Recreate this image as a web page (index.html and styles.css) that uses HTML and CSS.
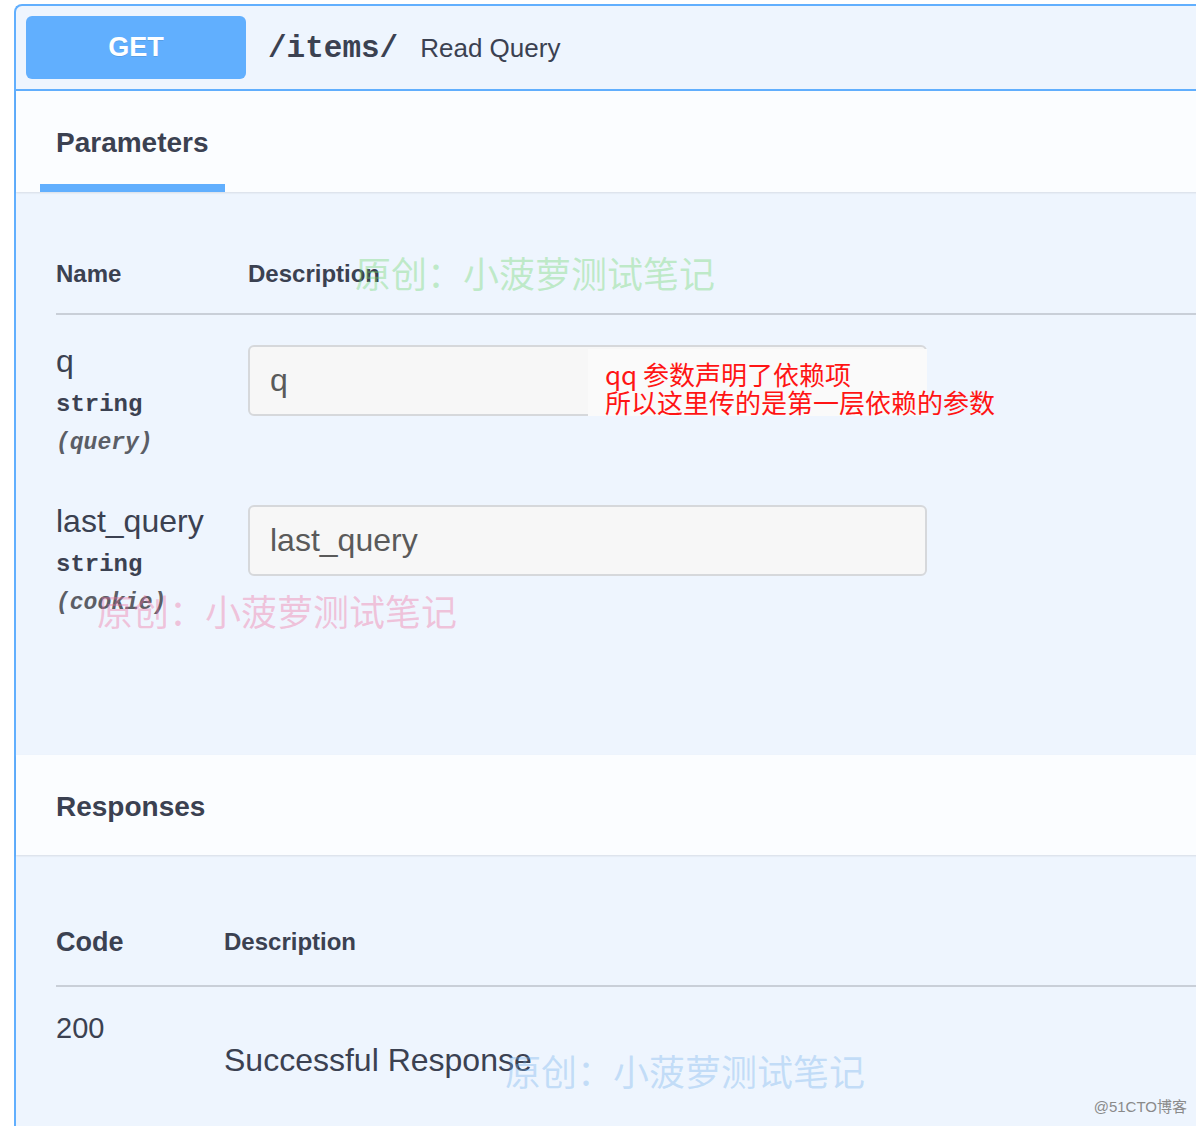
FILE: index.html
```html
<!DOCTYPE html>
<html lang="zh-CN">
<head>
<meta charset="utf-8">
<title>Read Query</title>
<link rel="stylesheet" href="styles.css">
</head>
<body>
<div class="page">
  <div class="opblock">
    <div class="summary">
      <span class="method">GET</span>
      <span class="path">/items/</span>
      <span class="summary-desc">Read Query</span>
    </div>
    <div class="tab-header">
      <div class="tab">Parameters</div>
    </div>
    <div class="params">
      <table class="ptable">
        <thead>
          <tr><th class="col-name">Name</th><th>Description</th></tr>
        </thead>
        <tbody>
          <tr>
            <td class="col-name">
              <div class="pname">q</div>
              <div class="ptype">string</div>
              <div class="pin">(query)</div>
            </td>
            <td><input class="pinput" type="text" placeholder="q"></td>
          </tr>
          <tr>
            <td class="col-name">
              <div class="pname">last_query</div>
              <div class="ptype">string</div>
              <div class="pin">(cookie)</div>
            </td>
            <td><input class="pinput" type="text" placeholder="last_query"></td>
          </tr>
        </tbody>
      </table>
    </div>
    <div class="resp-header">Responses</div>
    <div class="responses">
      <table class="rtable">
        <thead>
          <tr><th class="col-code">Code</th><th class="col-desc">Description</th></tr>
        </thead>
        <tbody>
          <tr>
            <td class="col-code code-val">200</td>
            <td><p class="resp-desc">Successful Response</p></td>
          </tr>
        </tbody>
      </table>
    </div>
  </div>

  <div class="note">qq 参数声明了依赖项<br>所以这里传的是第一层依赖的参数</div>
  <div class="wm wm-green">原创：小菠萝测试笔记</div>
  <div class="wm wm-pink">原创：小菠萝测试笔记</div>
  <div class="wm wm-blue">原创：小菠萝测试笔记</div>
  <div class="credit">@51CTO博客</div>
</div>
</body>
</html>
```

FILE: styles.css
```css
html, body {
  margin: 0;
  padding: 0;
  background: #ffffff;
  overflow: hidden;
}

body {
  font-family: "Liberation Sans", Arial, "Noto Sans CJK SC", sans-serif;
  color: #3b4151;
}

.page {
  position: relative;
  width: 1196px;
  height: 1126px;
  box-sizing: border-box;
  padding: 4px 0 0 14px;
  overflow: hidden;
}

.opblock {
  width: 1200px;
  border: 2px solid #61affe;
  border-right: 0;
  border-bottom: 0;
  border-radius: 8px 0 0 0;
  background: #eef5fe;
  height: 1200px;
}

/* summary bar */
.summary {
  display: flex;
  align-items: center;
  padding: 10px;
  border-bottom: 2px solid #61affe;
}

.method {
  width: 220px;
  height: 63px;
  display: flex;
  align-items: center;
  justify-content: center;
  background: #61affe;
  color: #ffffff;
  font-weight: bold;
  font-size: 27px;
  border-radius: 6px;
  text-shadow: 0 1px 0 rgba(0, 0, 0, 0.1);
}

.path {
  margin-left: 22px;
  font-family: "Liberation Mono", "Courier New", monospace;
  font-weight: bold;
  font-size: 31px;
  line-height: 36px;
  padding-top: 2px;
}

.summary-desc {
  margin-left: 22px;
  font-size: 26px;
  padding-top: 2px;
}

/* tab header */
.tab-header {
  display: flex;
  padding-left: 24px;
  background: #fbfdff;
  box-shadow: 0 1px 2px rgba(0, 0, 0, 0.1);
}

.tab {
  padding: 34px 16px 23px;
  line-height: 36px;
  font-size: 28px;
  font-weight: bold;
  border-bottom: 8px solid #61affe;
}

/* parameters */
.params {
  padding: 43px 0 120px 40px;
}

.ptable, .rtable {
  width: 100%;
  border-collapse: collapse;
}

.ptable th, .rtable th {
  text-align: left;
  padding: 24px 0;
  font-size: 24px;
  font-weight: bold;
  line-height: 30px;
  border-bottom: 2px solid #c9cfd8;
}

.ptable td {
  vertical-align: top;
  padding: 30px 0 22px;
}

.ptable .col-name {
  width: 192px;
}

.pname {
  font-size: 32px;
  line-height: 32px;
}

.ptype {
  font-family: "Liberation Mono", "Courier New", monospace;
  font-weight: bold;
  font-size: 24px;
  line-height: 36px;
  padding: 10px 0;
}

.pin {
  font-family: "Liberation Mono", "Courier New", monospace;
  font-style: italic;
  font-weight: bold;
  font-size: 23px;
  line-height: 20px;
  color: #5b5e66;
}

.pinput {
  display: block;
  width: 679px;
  height: 71px;
  margin: 0;
  box-sizing: border-box;
  padding: 0 20px;
  border: 2px solid #d6d8db;
  border-radius: 6px;
  background: #f7f7f7;
  font-family: "Liberation Sans", Arial, sans-serif;
  font-size: 32px;
  color: #3b4151;
  outline: none;
}

.pinput::placeholder {
  color: #5a5a5a;
  opacity: 1;
}

/* responses */
.resp-header {
  padding: 34px 0 30px 40px;
  line-height: 36px;
  font-size: 28px;
  font-weight: bold;
  background: #fbfdff;
  box-shadow: 0 1px 2px rgba(0, 0, 0, 0.1);
}

.responses {
  padding: 44px 0 0 40px;
}

.rtable th {
  line-height: 38px;
}

.rtable .col-code {
  width: 168px;
}

.rtable th.col-code {
  font-size: 27px;
}

.rtable td {
  vertical-align: top;
  padding: 24px 0;
}

.code-val {
  font-size: 29px;
  line-height: 34px;
}

.resp-desc {
  margin: 32px 0 0;
  font-size: 32px;
  line-height: 34px;
}

/* overlays */
.note {
  position: absolute;
  left: 588px;
  top: 349px;
  width: 322px;
  height: 56px;
  padding: 11px 0 0 17px;
  background: #fafafa;
  color: #ff1414;
  font-family: "Noto Sans CJK SC", "Liberation Sans", sans-serif;
  font-size: 26px;
  line-height: 28px;
  white-space: nowrap;
}

.wm {
  position: absolute;
  font-family: "Noto Sans CJK SC", sans-serif;
  font-size: 36px;
  line-height: 40px;
  white-space: nowrap;
  pointer-events: none;
}

.wm-green {
  left: 355px;
  top: 252px;
  color: rgba(110, 215, 110, 0.38);
}

.wm-pink {
  left: 97px;
  top: 590px;
  color: rgba(240, 110, 160, 0.38);
}

.wm-blue {
  left: 505px;
  top: 1050px;
  color: rgba(110, 175, 235, 0.35);
}

.credit {
  position: absolute;
  right: 9px;
  top: 1097px;
  font-family: "Liberation Sans", "Noto Sans CJK SC", sans-serif;
  font-size: 15px;
  line-height: 20px;
  color: #8a8a8a;
}
```
